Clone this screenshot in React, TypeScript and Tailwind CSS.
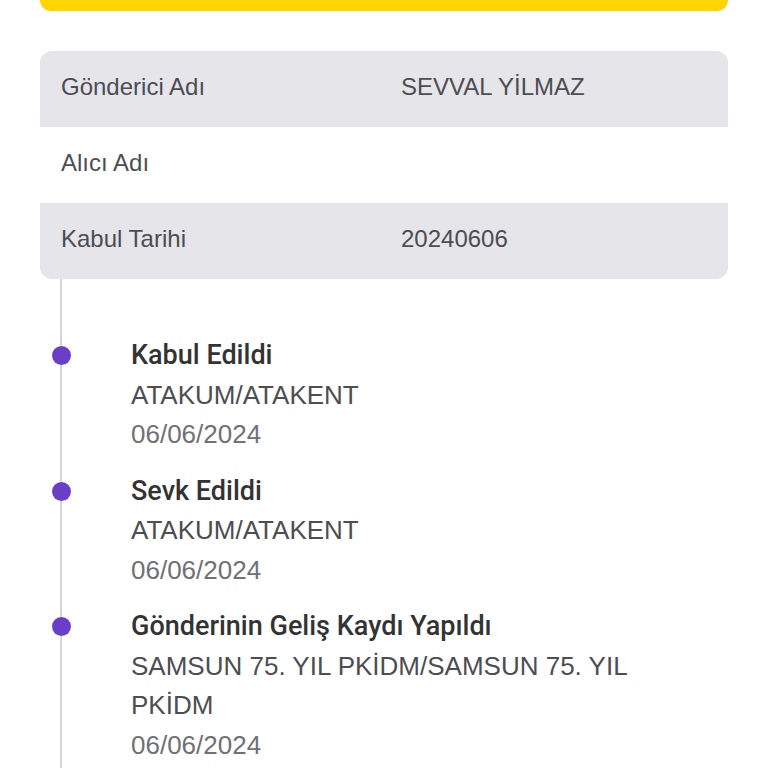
const rows = [
  { label: "Gönderici Adı", value: "SEVVAL YİLMAZ", shaded: true },
  { label: "Alıcı Adı", value: "", shaded: false },
  { label: "Kabul Tarihi", value: "20240606", shaded: true },
];

const events = [
  { title: "Kabul Edildi", place: "ATAKUM/ATAKENT", date: "06/06/2024" },
  { title: "Sevk Edildi", place: "ATAKUM/ATAKENT", date: "06/06/2024" },
  { title: "Gönderinin Geliş Kaydı Yapıldı", place: "SAMSUN 75. YIL PKİDM/SAMSUN 75. YIL PKİDM", date: "06/06/2024" },
];

export default function App() {
  return (
    <div className="min-h-[768px] bg-white px-10 overflow-hidden" style={{ fontFamily: '"Liberation Sans", Arial, sans-serif' }}>
      <div className="h-[11px] rounded-b-[14px] bg-[#ffd500]" />

      <div className="mt-[40px] rounded-[12px] overflow-hidden">
        {rows.map((r) => (
          <div key={r.label} className={`flex items-center h-[76px] pb-[4px] text-[24px] text-[#4d4d52] ${r.shaded ? "bg-[#e5e5ea]" : "bg-white"}`}>
            <span className="w-[361px] pl-[21px] shrink-0">{r.label}</span>
            <span>{r.value}</span>
          </div>
        ))}
      </div>

      <div className="ml-[20px] border-l-2 border-[#d6d6da] pt-[57px] pb-10 flex flex-col gap-[17px]">
        {events.map((e) => (
          <div key={e.title} className="relative pl-[69px] max-w-[620px] text-[26px] leading-[39.5px]">
            <span className="absolute left-[-10px] top-[10px] w-[19px] h-[19px] rounded-full bg-[#6a3fc7]" />
            <p className="font-medium text-[27px] text-[#333336] font-['Roboto',sans-serif]">{e.title}</p>
            <p className="text-[#4d4d52]">{e.place}</p>
            <p className="text-[#707075]">{e.date}</p>
          </div>
        ))}
      </div>
    </div>
  );
}
